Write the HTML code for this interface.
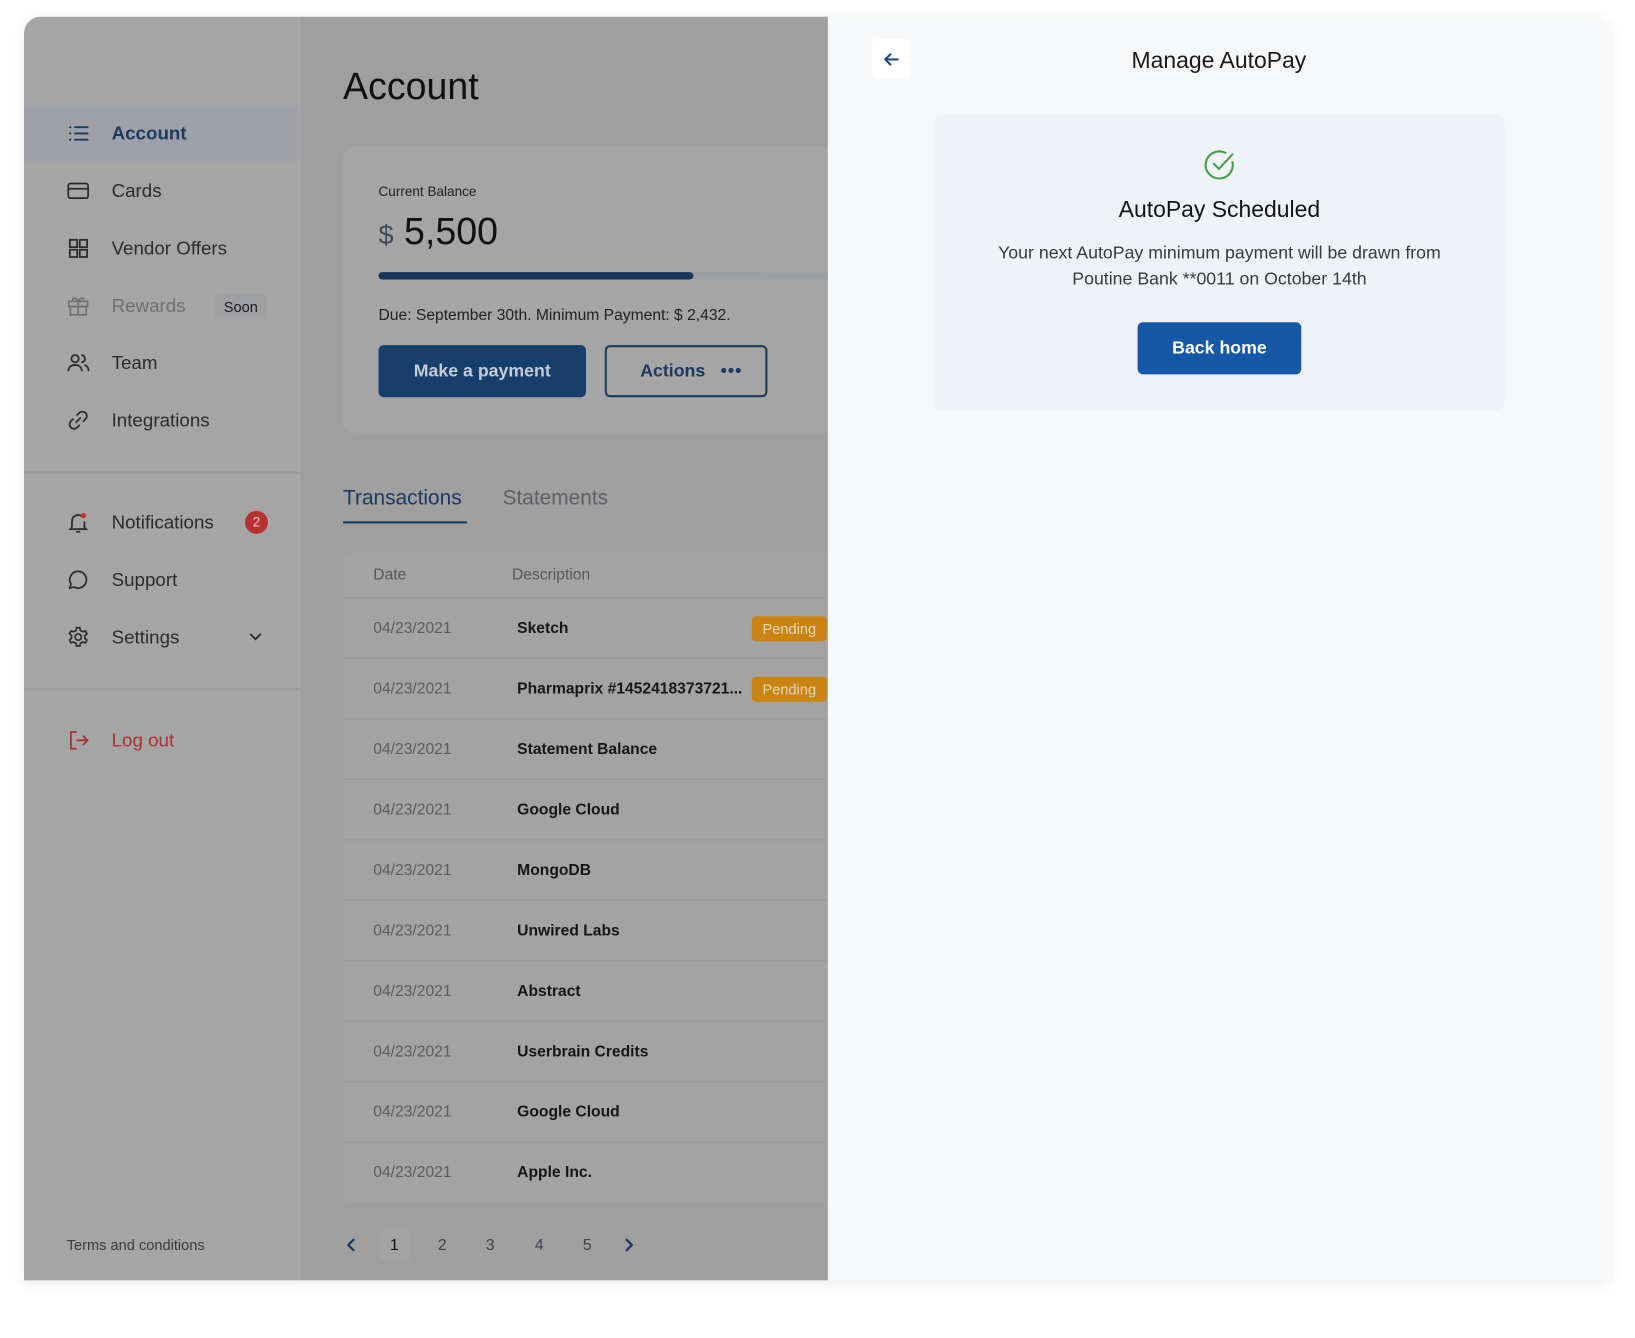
<!DOCTYPE html>
<html><head><meta charset="utf-8"><style>
*{box-sizing:border-box;margin:0;padding:0}
html,body{width:1635px;height:1338px;overflow:hidden;background:#fff;font-family:"Liberation Sans",sans-serif}
#w{position:absolute;left:0;top:0;width:1568px;height:1283px;transform:scale(1.0427);transform-origin:0 0}
.a{position:absolute}
.card{left:23px;top:16px;width:1521px;height:1212px;border-radius:16px 16px 0 0;overflow:hidden;box-shadow:0 2px 12px rgba(0,0,0,.08)}
.side{left:0;top:0;width:264px;height:1212px;background:#a5a5a6}
.main{left:264px;top:0;width:507px;height:1212px;background:#9f9fa0}
.nav{left:0;width:264px;height:54px;display:flex;align-items:center;font-size:18px;color:#2b2b2c}
.nav svg{position:absolute;left:41px;top:50%;margin-top:-11px}
.nav span{position:absolute;left:84px}
.div{left:0;width:264px;height:2px;background:#9a9a9b}
.right{left:771px;top:0;width:750px;height:1212px;background:#f7f8fa}
.row{left:42px;width:465px;height:58px;border-top:1px solid #9a9a9b;background:#a3a3a4;font-size:15px}
.row .d{position:absolute;left:29px;top:20px;color:#5c5d60}
.row .n{position:absolute;left:167px;top:20px;color:#151617;font-weight:bold}
.pend{position:absolute;left:392px;top:17px;width:72px;height:24px;background:#c98414;color:#e8d6b8;border-radius:4px;font-size:14px;text-align:center;line-height:24px}
.pg{top:1170px;font-size:15px;color:#3d4150}
</style></head><body><div id="w">
<div class="a card">
 <div class="a side">
  <div class="a nav" style="top:85px;background:#9ea2a8;color:#1c3a60;font-weight:bold"><svg width="22" height="22" viewBox="0 0 22 22" fill="none" stroke="#1c3a60" stroke-width="1.8" stroke-linecap="round"><path d="M3 5h.5M3 11h.5M3 17h.5M8 5h12M8 11h12M8 17h12"/></svg><span>Account</span></div>
  <div class="a nav" style="top:140px"><svg width="22" height="22" viewBox="0 0 22 22" fill="none" stroke="#2b2b2c" stroke-width="1.7"><rect x="1.5" y="4" width="19" height="14" rx="2"/><path d="M1.5 9h19"/></svg><span>Cards</span></div>
  <div class="a nav" style="top:195px"><svg width="22" height="22" viewBox="0 0 22 22" fill="none" stroke="#2b2b2c" stroke-width="1.7"><rect x="3" y="3" width="7" height="7"/><rect x="12.5" y="3" width="7" height="7"/><rect x="3" y="12.5" width="7" height="7"/><rect x="12.5" y="12.5" width="7" height="7"/></svg><span>Vendor Offers</span></div>
  <div class="a nav" style="top:250px;color:#6f7073"><svg width="22" height="22" viewBox="0 0 22 22" fill="none" stroke="#6f7073" stroke-width="1.6"><rect x="2" y="7" width="18" height="5"/><rect x="3.5" y="12" width="15" height="8"/><path d="M11 7v13M11 7C9 3 5 3 6 6M11 7c2-4 6-4 5-1"/></svg><span>Rewards</span><div class="a" style="left:183px;top:16px;width:50px;height:24px;background:#9ea0a4;border-radius:4px;font-size:14px;color:#1a1a1b;text-align:center;line-height:24px">Soon</div></div>
  <div class="a nav" style="top:305px"><svg width="22" height="22" viewBox="0 0 22 22" fill="none" stroke="#2b2b2c" stroke-width="1.7"><circle cx="8" cy="7" r="3.5"/><path d="M1.5 19c0-4 3-6 6.5-6s6.5 2 6.5 6M14 3.5a3.5 3.5 0 010 7M17 13c2.5.8 4 3 4 6"/></svg><span>Team</span></div>
  <div class="a nav" style="top:360px"><svg width="22" height="22" viewBox="0 0 22 22" fill="none" stroke="#2b2b2c" stroke-width="1.7" stroke-linecap="round"><path d="M9 13l4-4M10 6l2-2a4 4 0 016 6l-2 2M12 16l-2 2a4 4 0 01-6-6l2-2"/></svg><span>Integrations</span></div>
  <div class="a div" style="top:436px"></div>
  <div class="a nav" style="top:458px"><svg width="22" height="22" viewBox="0 0 22 22" fill="none" stroke="#2b2b2c" stroke-width="1.7"><path d="M5 16V10a6 6 0 0110-4.5M17 10v6l1.5 1.5h-15L5 16M9 20h4"/><circle cx="16" cy="4.5" r="2.5" fill="#c0302c" stroke="none"/></svg><span>Notifications</span><div class="a" style="left:212px;top:16px;width:22px;height:22px;border-radius:11px;background:#b5322e;color:#e8c8c6;font-size:13px;text-align:center;line-height:22px">2</div></div>
  <div class="a nav" style="top:513px"><svg width="22" height="22" viewBox="0 0 22 22" fill="none" stroke="#2b2b2c" stroke-width="1.7"><path d="M11 3a8 8 0 11-4 15l-4 1 1-4A8 8 0 0111 3z"/></svg><span>Support</span></div>
  <div class="a nav" style="top:568px"><svg width="22" height="22" viewBox="0 0 22 22" fill="none" stroke="#2b2b2c" stroke-width="1.6"><circle cx="11" cy="11" r="3"/><path d="M9.5 2h3l.6 2.6 2.2 1.3 2.6-.8 1.5 2.6-2 1.8v2.6l2 1.8-1.5 2.6-2.6-.8-2.2 1.3-.6 2.6h-3l-.6-2.6-2.2-1.3-2.6.8-1.5-2.6 2-1.8V9.5l-2-1.8 1.5-2.6 2.6.8 2.2-1.3z"/></svg><span>Settings</span><svg style="left:214px" width="16" height="22" viewBox="0 0 16 22" fill="none" stroke="#2b2b2c" stroke-width="1.8"><path d="M3 8l5 5 5-5"/></svg></div>
  <div class="a div" style="top:644px"></div>
  <div class="a nav" style="top:667px;color:#a8342f"><svg width="22" height="22" viewBox="0 0 22 22" fill="none" stroke="#a8342f" stroke-width="1.7" stroke-linecap="round"><path d="M9 3H4v16h5M10 11h10M16 7l4 4-4 4"/></svg><span>Log out</span></div>
  <div class="a" style="left:41px;top:1170px;font-size:14px;color:#3a3b3d">Terms and conditions</div>
 </div>
 <div class="a main">
  <div class="a" style="left:42px;top:46px;font-size:36px;color:#111">Account</div>
  <div class="a" style="left:42px;top:125px;width:480px;height:274px;background:#a5a5a6;border-radius:10px">
   <div class="a" style="left:34px;top:35px;font-size:13px;color:#222">Current Balance</div>
   <div class="a" style="left:34px;top:60px;font-size:36px;color:#111"><span style="font-size:26px;color:#3e4a5c">$</span> 5,500</div>
   <div class="a" style="left:34px;top:120px;width:450px;height:7px;background:#9b9ea3;border-radius:4px"></div>
   <div class="a" style="left:34px;top:120px;width:302px;height:7px;background:#1a3458;border-radius:4px"></div>
   <div class="a" style="left:34px;top:153px;font-size:15px;color:#222">Due: September 30th. Minimum Payment: $ 2,432.</div>
   <div class="a" style="left:34px;top:190px;width:199px;height:50px;background:#183f6b;border-radius:5px;color:#c3cbd6;font-size:17px;font-weight:bold;text-align:center;line-height:50px">Make a payment</div>
   <div class="a" style="left:251px;top:190px;width:156px;height:50px;border:2px solid #1c3a60;border-radius:5px;color:#1c3a60;font-size:17px;font-weight:bold;line-height:46px;padding-left:32px">Actions <span style="margin-left:10px;letter-spacing:1px">•••</span></div>
  </div>
  <div class="a" style="left:42px;top:451px;font-size:20px;color:#1c3a60">Transactions</div>
  <div class="a" style="left:42px;top:484px;width:119px;height:2px;background:#1c3a60"></div>
  <div class="a" style="left:195px;top:451px;font-size:20px;color:#5e6065">Statements</div>
  <div class="a" style="left:42px;top:514px;width:465px;height:43px;background:#a3a3a4;border-radius:8px 0 0 0"></div>
  <div class="a" style="left:71px;top:527px;font-size:15px;color:#55575b">Date</div>
  <div class="a" style="left:204px;top:527px;font-size:15px;color:#55575b">Description</div>
  <div class="a row" style="top:557px"><span class="d">04/23/2021</span><span class="n">Sketch</span><div class="pend">Pending</div></div>
  <div class="a row" style="top:615px"><span class="d">04/23/2021</span><span class="n">Pharmaprix #1452418373721...</span><div class="pend">Pending</div></div>
  <div class="a row" style="top:673px"><span class="d">04/23/2021</span><span class="n">Statement Balance</span></div>
  <div class="a row" style="top:731px"><span class="d">04/23/2021</span><span class="n">Google Cloud</span></div>
  <div class="a row" style="top:789px"><span class="d">04/23/2021</span><span class="n">MongoDB</span></div>
  <div class="a row" style="top:847px"><span class="d">04/23/2021</span><span class="n">Unwired Labs</span></div>
  <div class="a row" style="top:905px"><span class="d">04/23/2021</span><span class="n">Abstract</span></div>
  <div class="a row" style="top:963px"><span class="d">04/23/2021</span><span class="n">Userbrain Credits</span></div>
  <div class="a row" style="top:1021px"><span class="d">04/23/2021</span><span class="n">Google Cloud</span></div>
  <div class="a row" style="top:1079px;border-radius:0 0 0 8px"><span class="d">04/23/2021</span><span class="n">Apple Inc.</span></div>
  <svg class="a" style="left:44px;top:1171px" width="12" height="14" viewBox="0 0 12 14" fill="none" stroke="#1c3a60" stroke-width="2.2" stroke-linecap="round" stroke-linejoin="round"><path d="M8 2L3 7l5 5"/></svg>
  <div class="a" style="left:77px;top:1163px;width:30px;height:30px;background:#a3a3a4;border-radius:4px"></div>
  <div class="a pg" style="left:87px;color:#111">1</div>
  <div class="a pg" style="left:133px">2</div>
  <div class="a pg" style="left:179px">3</div>
  <div class="a pg" style="left:226px">4</div>
  <div class="a pg" style="left:272px">5</div>
  <svg class="a" style="left:310px;top:1171px" width="12" height="14" viewBox="0 0 12 14" fill="none" stroke="#1c3a60" stroke-width="2.2" stroke-linecap="round" stroke-linejoin="round"><path d="M4 2l5 5-5 5"/></svg>
 </div>
 <div class="a right">
  <div class="a" style="left:42px;top:21px;width:38px;height:39px;background:#fff;border-radius:7px"><svg style="position:absolute;left:10px;top:11px" width="18" height="18" viewBox="0 0 18 18" fill="none" stroke="#1c4a85" stroke-width="2" stroke-linecap="round" stroke-linejoin="round"><path d="M15 9H3M8 4L3 9l5 5"/></svg></div>
  <div class="a" style="left:0;width:750px;top:29px;text-align:center;font-size:22px;color:#1a1a1a">Manage AutoPay</div>
  <div class="a" style="left:102px;top:94px;width:547px;height:283px;background:#eff2f7;border-radius:8px">
   <svg style="position:absolute;left:259px;top:33px" width="30" height="30" viewBox="0 0 30 30" fill="none" stroke="#43a047" stroke-width="2" stroke-linecap="round"><path d="M27 12.5A13 13 0 1120 3.5"/><path d="M9 14l5 5L27 5"/></svg>
   <div class="a" style="left:0;width:547px;top:78px;text-align:center;font-size:22px;color:#151515">AutoPay Scheduled</div>
   <div class="a" style="left:0;width:547px;top:120px;text-align:center;font-size:17px;line-height:25px;color:#3a3a3a">Your next AutoPay minimum payment will be drawn from<br>Poutine Bank **0011 on October 14th</div>
   <div class="a" style="left:195px;top:199px;width:157px;height:50px;background:#1558a8;border-radius:5px;color:#fff;font-size:17px;font-weight:bold;text-align:center;line-height:50px">Back home</div>
  </div>
 </div>
</div>
</div></body></html>
